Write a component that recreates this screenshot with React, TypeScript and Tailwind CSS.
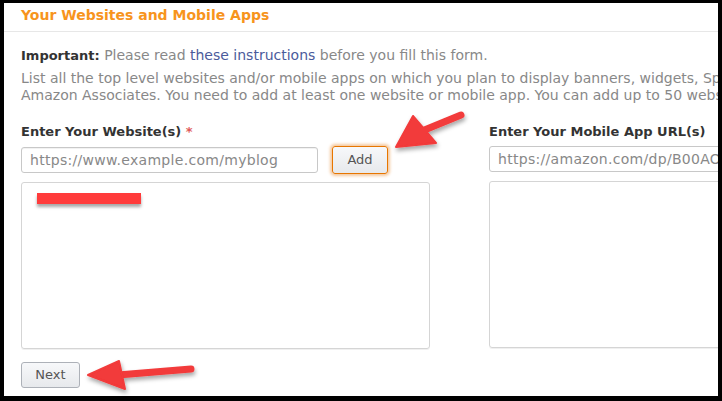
export default function App() {
  return (
    <main className="h-[401px] w-[722px] bg-black pb-[5px] pl-[4px] pr-[4px] pt-[3px] font-['DejaVu_Sans',sans-serif]">
      <div className="relative h-full w-full overflow-hidden bg-white">
        {/* Header */}
        <div className="flex h-[29px] items-center border-b border-[#e7e7e7] px-[17px] pb-[3px]">
          <h2 className="text-[14px] font-bold text-[#f7941d]">Your Websites and Mobile Apps</h2>
        </div>

        {/* Intro */}
        <div className="whitespace-nowrap px-[17px] pt-[15px] text-[14px] leading-[17px] text-[#888]">
          <p>
            <span className="text-[13px] font-bold text-[#333]">Important:</span> Please read{" "}
            <span className="text-[#4b5b9b]">these instructions</span> before you fill this form.
          </p>
          <p className="mt-[6px]">
            List all the top level websites and/or mobile apps on which you plan to display banners, widgets, Special Links, or other content from
            <br />
            Amazon Associates. You need to add at least one website or mobile app. You can add up to 50 websites and mobile apps.
          </p>
        </div>

        {/* Columns */}
        <div className="mt-[19px] flex gap-[59px] px-[17px]">
          <div className="flex w-[409px] shrink-0 flex-col">
            <label className="text-[13px] font-bold leading-[17px] text-[#333]">
              Enter Your Website(s) <span className="text-[#e05a5a]">*</span>
            </label>
            <div className="mt-[6px] flex items-center gap-[14px]">
              <div className="flex h-[26px] w-[297px] items-center rounded-[3px] border border-[#c8c8c8] px-[8px] text-[14px] tracking-[0.3px] text-[#888] shadow-[inset_0_1px_0_rgba(0,0,0,0.05)]">
                https://www.example.com/myblog
              </div>
              <button className="h-[28px] w-[56px] rounded-[3px] border border-[#e77600] bg-gradient-to-b from-[#f7f8fa] to-[#e7e9ec] text-[13px] text-[#555] shadow-[0_0_3px_2px_rgba(228,121,17,0.4)]">
                Add
              </button>
            </div>
            <div className="relative mt-[8px] h-[167px] rounded-[3px] border border-[#d5d5d5] shadow-[0_1px_0_rgba(0,0,0,0.06)]">
              <div className="absolute left-[15px] top-[10px] h-[11px] w-[104px] bg-[#ff3b3b] shadow-[0_3px_3px_rgba(0,0,0,0.35)]"></div>
            </div>
          </div>

          <div className="flex w-[320px] shrink-0 flex-col">
            <label className="text-[13px] font-bold leading-[17px] text-[#333]">Enter Your Mobile App URL(s)</label>
            <div className="mt-[6px] flex h-[26px] items-center rounded-[3px] border border-[#c8c8c8] px-[8px] text-[14px] tracking-[0.3px] text-[#888]">
              https://amazon.com/dp/B00AOVZ4J6
            </div>
            <div className="mt-[9px] h-[167px] rounded-[3px] border border-[#d5d5d5] shadow-[0_1px_0_rgba(0,0,0,0.06)]"></div>
          </div>
        </div>

        {/* Footer */}
        <div className="px-[17px] pt-[13px]">
          <button className="h-[26px] w-[59px] rounded-[3px] border border-[#adb1b8] bg-gradient-to-b from-[#f7f8fa] to-[#e7e9ec] text-[13px] text-[#555]">
            Next
          </button>
        </div>

        {/* Arrows */}
        <svg className="pointer-events-none absolute left-[-4px] top-[-3px]" width="722" height="401">
          <defs>
            <filter id="sh" x="-20%" y="-20%" width="140%" height="160%">
              <feDropShadow dx="1" dy="3" stdDeviation="2" floodColor="#000" floodOpacity="0.35" />
            </filter>
          </defs>
          <g filter="url(#sh)" fill="#f23a3a" stroke="#f23a3a" strokeLinecap="round">
            <line x1="461" y1="115" x2="422" y2="131" strokeWidth="7" />
            <polygon points="396,147 413,116 436,143" strokeWidth="2" strokeLinejoin="round" />
            <line x1="191" y1="369" x2="118" y2="375" strokeWidth="7" />
            <polygon points="88,375 119,361 125,389" strokeWidth="2" strokeLinejoin="round" />
          </g>
        </svg>
      </div>
    </main>
  )
}
